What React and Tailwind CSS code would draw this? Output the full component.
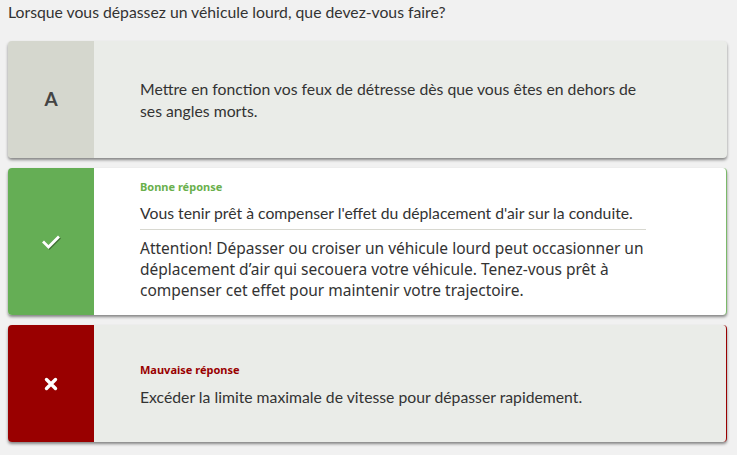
import React from 'react';

const lato = { fontFamily: 'Lato, "Liberation Sans", sans-serif' };
const ubuntu = { fontFamily: '"Noto Sans", "DejaVu Sans", sans-serif' };

const Check = () => (
  <svg width="18" height="14" viewBox="0 0 18 14" className="drop-shadow-[1px_1px_0_rgba(0,0,0,0.35)]">
    <path d="M2 7.5 L6.5 12 L16 2.5" fill="none" stroke="#fff" strokeWidth="2.8" strokeLinecap="square" />
  </svg>
);

const Cross = () => (
  <svg width="14" height="14" viewBox="0 0 14 14">
    <path d="M2.5 2.5 L11.5 11.5 M11.5 2.5 L2.5 11.5" fill="none" stroke="#fff" strokeWidth="3.4" strokeLinecap="round" />
  </svg>
);

const Answer = ({ side, sideClass, cardClass, bodyClass = '', children }) => (
  <div className={`flex rounded-[4px] overflow-hidden shadow-[0_2px_3px_rgba(0,0,0,0.45)] ${cardClass}`}>
    <div className={`w-[86px] shrink-0 flex items-center justify-center ${sideClass}`}>{side}</div>
    <div className={`flex-1 flex flex-col justify-center pl-[46px] pr-6 ${bodyClass}`}>{children}</div>
  </div>
);

export default function App() {
  return (
    <div className="min-h-[455px] bg-[#f1f1f1] px-2 pt-[2px] text-[#333]" style={lato}>
      <p className="text-[15.75px] leading-[20px] text-[#333]">Lorsque vous dépassez un véhicule lourd, que devez-vous faire?</p>

      <div className="mt-[19px] flex flex-col gap-[10px] w-[719px]">
        <Answer
          side={<span className="text-[19px] font-bold text-[#444]" style={lato}>A</span>}
          sideClass="bg-[#d5d7ce]"
          cardClass="bg-[#eaece8] min-h-[117px]"
        >
          <p className="max-w-[510px] text-[15.75px] leading-[22px] text-[#333]">
            Mettre en fonction vos feux de détresse dès que vous êtes en dehors de ses angles morts.
          </p>
        </Answer>

        <Answer
          side={<Check />}
          sideClass="bg-[#65ae55]"
          cardClass="bg-white border-r border-[#7bb96a] min-h-[147px]"
        >
          <div className="pt-[9px] pb-[12px]">
            <p className="text-[11px] font-bold leading-[14px] text-[#6ab04c]" style={ubuntu}>Bonne réponse</p>
            <p className="mt-[8px] text-[15.75px] leading-[22px] text-[#333]">
              Vous tenir prêt à compenser l'effet du déplacement d'air sur la conduite.
            </p>
            <div className="mt-[5px] w-[506px] h-px bg-[#d8d8d0]" />
            <p className="mt-[8px] max-w-[510px] text-[15.5px] leading-[21px] text-[#333]" style={ubuntu}>
              Attention! Dépasser ou croiser un véhicule lourd peut occasionner un déplacement d’air qui secouera votre véhicule. Tenez-vous prêt à compenser cet effet pour maintenir votre trajectoire.
            </p>
          </div>
        </Answer>

        <Answer
          side={<Cross />}
          sideClass="bg-[#990000]"
          cardClass="bg-[#eaece8] border-r border-[#990000] min-h-[117px]"
          bodyClass="pt-[4px]"
        >
          <p className="text-[11px] font-bold leading-[14px] text-[#990000]" style={ubuntu}>Mauvaise réponse</p>
          <p className="mt-[8px] text-[15.75px] leading-[24px] text-[#333]">
            Excéder la limite maximale de vitesse pour dépasser rapidement.
          </p>
        </Answer>
      </div>
    </div>
  );
}
